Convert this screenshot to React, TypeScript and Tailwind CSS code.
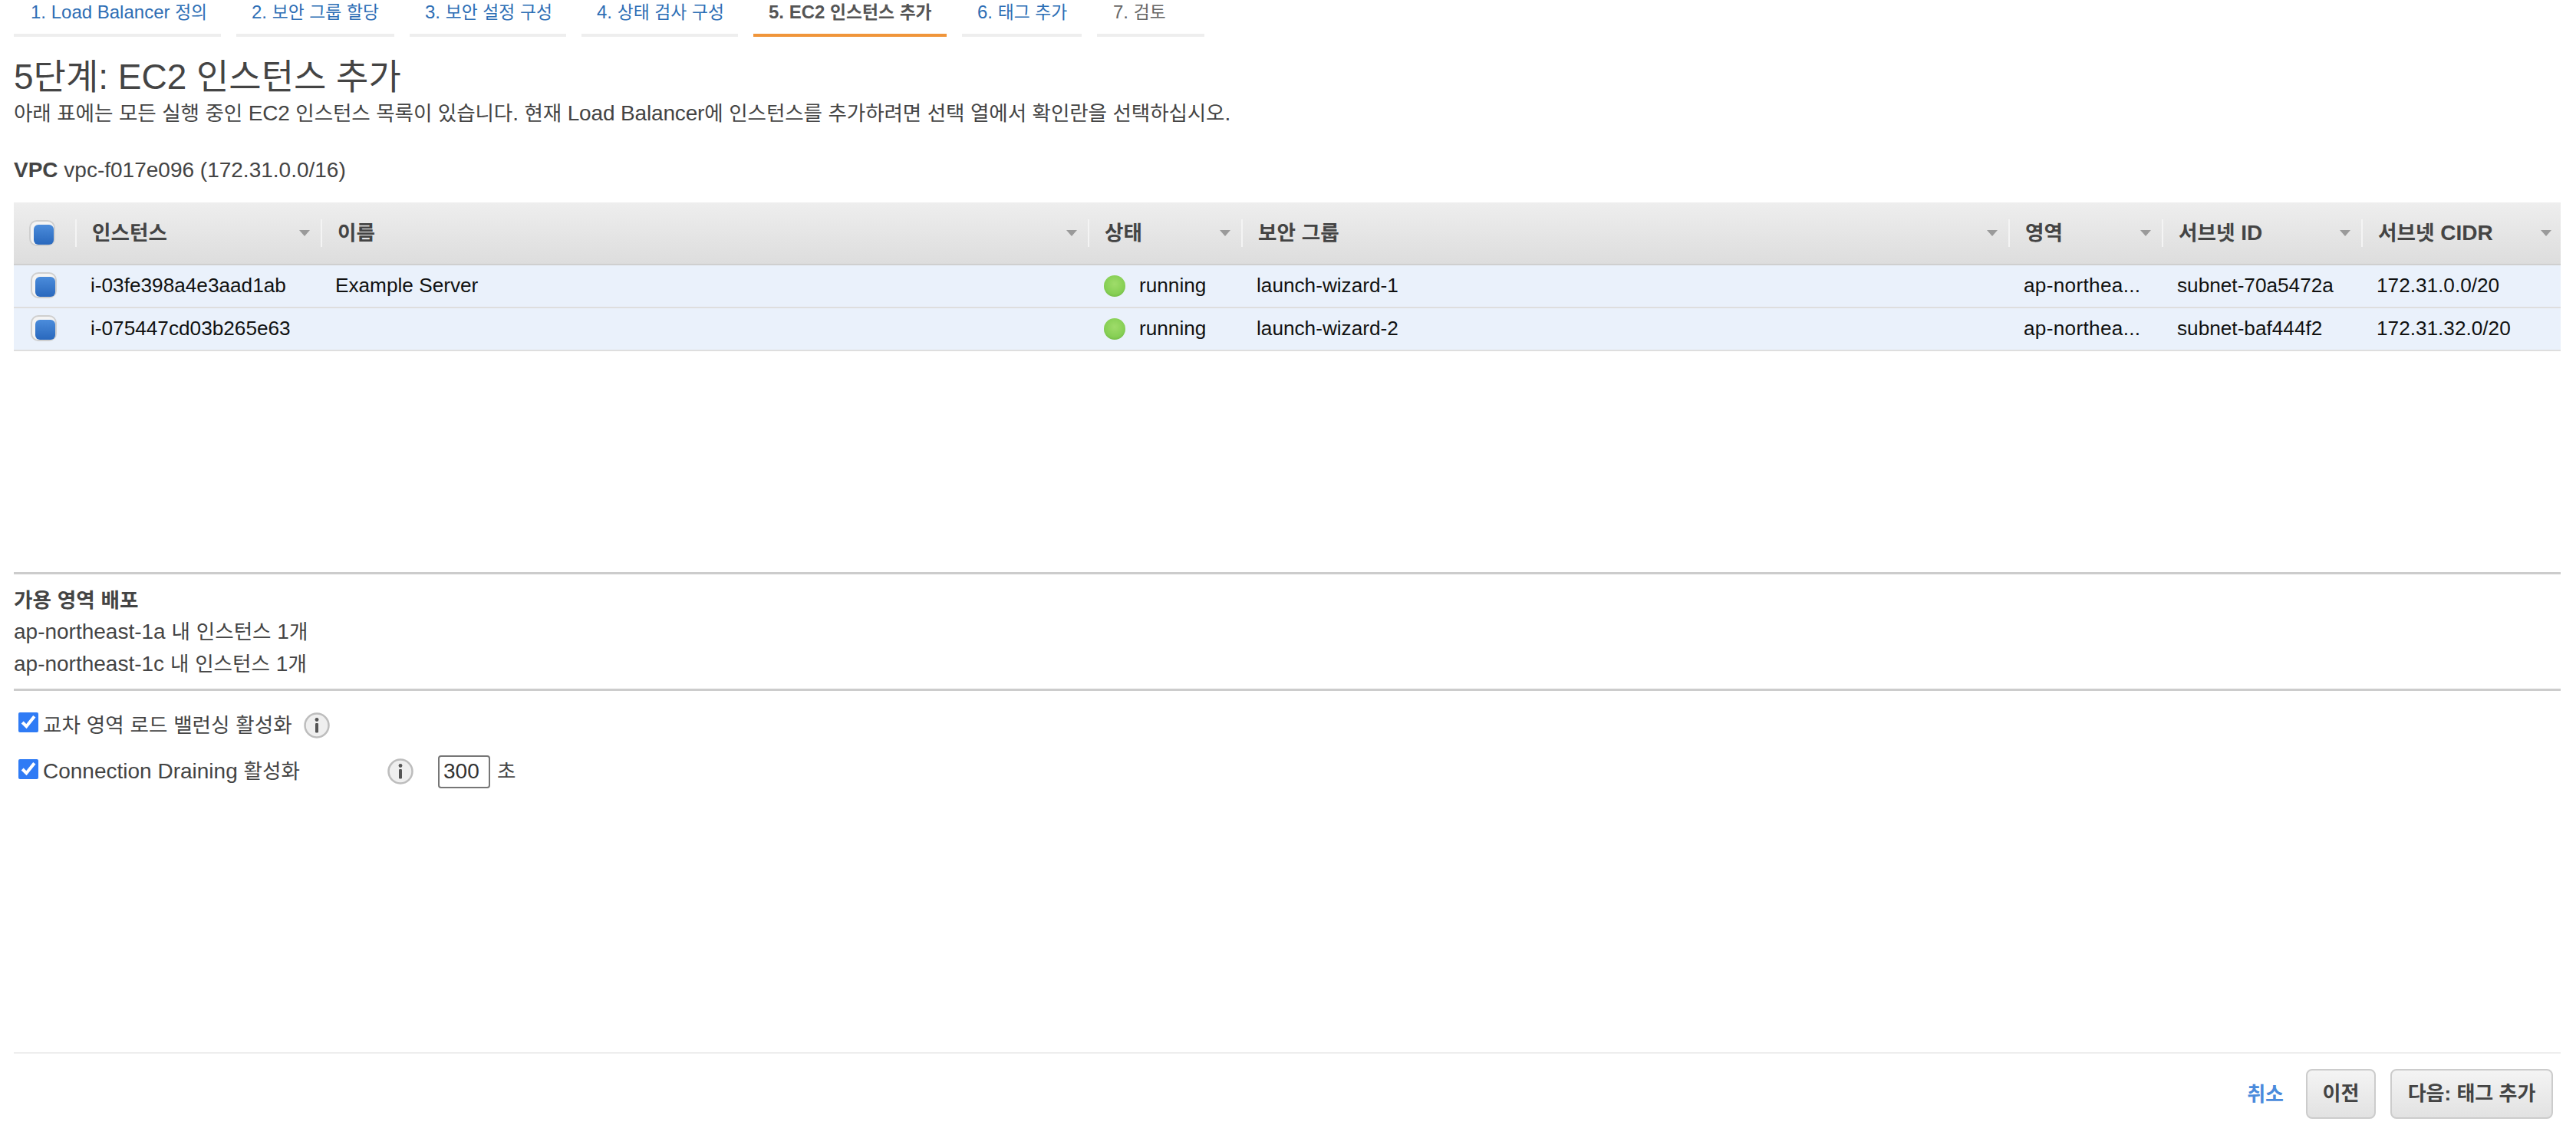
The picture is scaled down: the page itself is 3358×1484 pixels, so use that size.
const steps = [
  { label: "1. Load Balancer 정의", width: "w-[270px] pl-[22px] text-[#2d6eb5]", bar: "border-[#eeeeee]" },
  { label: "2. 보안 그룹 할당", width: "w-[206px] pl-[20px] text-[#2d6eb5]", bar: "border-[#eeeeee]" },
  { label: "3. 보안 설정 구성", width: "w-[204px] pl-[20px] text-[#2d6eb5]", bar: "border-[#eeeeee]" },
  { label: "4. 상태 검사 구성", width: "w-[204px] pl-[20px] text-[#2d6eb5]", bar: "border-[#eeeeee]" },
  { label: "5. EC2 인스턴스 추가", width: "w-[252px] pl-[20px] font-bold text-[#555555]", bar: "border-[#f0953a]" },
  { label: "6. 태그 추가", width: "w-[156px] pl-[20px] text-[#2d6eb5]", bar: "border-[#eeeeee]" },
  { label: "7. 검토", width: "w-[140px] pl-[21px] text-[#666666]", bar: "border-[#eeeeee]" },
];

const columns = ["인스턴스", "이름", "상태", "보안 그룹", "영역", "서브넷 ID", "서브넷 CIDR"];

const instances = [
  { id: "i-03fe398a4e3aad1ab", name: "Example Server", group: "launch-wizard-1", zone: "ap-northea...", subnet: "subnet-70a5472a", cidr: "172.31.0.0/20" },
  { id: "i-075447cd03b265e63", name: "", group: "launch-wizard-2", zone: "ap-northea...", subnet: "subnet-baf444f2", cidr: "172.31.32.0/20" },
];

const gridCols = "grid grid-cols-[80px_320px_1000px_200px_1000px_200px_260px_260px]";

// hangul runs a bit smaller than the latin around them
function Mixed({ text }: { text: string }) {
  return (
    <>
      {text.split(/([가-힣]+)/).map((part, i) =>
        /[가-힣]/.test(part) ? (
          <span key={i} className="text-[0.95em]">
            {part}
          </span>
        ) : (
          part
        ),
      )}
    </>
  );
}

function RowCheck() {
  return (
    <div className="flex h-[34px] w-[34px] items-end justify-end rounded-[10px] border-2 border-[#cfcfcf] bg-[#f4f4f4]">
      <div className="h-[26px] w-[26px] rounded-[6px] bg-linear-to-b from-[#4b8cdb] to-[#2968bd]" />
    </div>
  );
}

function InfoIcon() {
  return (
    <svg width="34" height="34" viewBox="0 0 34 34" className="shrink-0">
      <circle cx="17" cy="17" r="15.5" fill="#efefef" stroke="#bdbdbd" strokeWidth="2.5" />
      <circle cx="17" cy="9.5" r="2.4" fill="#555555" />
      <rect x="15" y="14" width="4" height="12.5" rx="1.2" fill="#555555" />
    </svg>
  );
}

export default function App() {
  return (
    <div className="flex h-[1484px] flex-col overflow-hidden bg-white pl-[18px] pr-[20px] font-['Liberation_Sans','Noto_Sans_CJK_KR',sans-serif] text-[28px] text-[#444444]">
      <div className="flex gap-5">
        {steps.map((step) => (
          <div key={step.label} className={`h-[48px] border-b-4 text-[24px] leading-[32px] ${step.width} ${step.bar}`}>
            <Mixed text={step.label} />
          </div>
        ))}
      </div>

      <h1 className="mt-[26px] text-[46px] leading-[52px]">5단계: EC2 인스턴스 추가</h1>
      <p className="mt-[4px] leading-[36px] tracking-[-0.15px]">
        <Mixed text="아래 표에는 모든 실행 중인 EC2 인스턴스 목록이 있습니다. 현재 Load Balancer에 인스턴스를 추가하려면 선택 열에서 확인란을 선택하십시오." />
      </p>
      <p className="mt-[38px] leading-[36px]">
        <b>VPC</b> vpc-f017e096 (172.31.0.0/16)
      </p>

      <div className="mt-[24px]">
        <div className={`${gridCols} h-[82px] items-center border-b-2 border-[#cfcfcf] bg-linear-to-b from-[#eeeeee] to-[#dddddd]`}>
          <div className="flex justify-start pl-[20px]">
            <RowCheck />
          </div>
          {columns.map((col) => (
            <div key={col} className="flex h-[36px] items-center justify-between border-l-2 border-[#f4f4f4] pl-[20px] pr-[14px] font-bold last:pr-[12px]">
              <span>
                <Mixed text={col} />
              </span>
              <span className="h-0 w-0 border-x-[7px] border-t-[8px] border-x-transparent border-t-[#9a9a9a]" />
            </div>
          ))}
        </div>
        {instances.map((row) => (
          <div key={row.id} className={`${gridCols} h-[56px] items-center border-b-2 border-[#dedede] bg-[#eaf1fb] text-[26.2px] text-[#111111]`}>
            <div className="-mt-[3px] pl-[22px]">
              <RowCheck />
            </div>
            <div className="pl-[20px]">{row.id}</div>
            <div className="pl-[19px]">{row.name}</div>
            <div className="flex items-center gap-[18px] pl-[21px]">
              <span className="mt-[1px] h-[28px] w-[28px] rounded-full bg-[radial-gradient(circle_at_50%_40%,#9fdc6a_0%,#86cf54_60%,#5fa838_100%)]" />
              running
            </div>
            <div className="pl-[20px]">{row.group}</div>
            <div className="pl-[20px] tracking-[0.3px]">{row.zone}</div>
            <div className="pl-[20px]">{row.subnet}</div>
            <div className="pl-[20px]">{row.cidr}</div>
          </div>
        ))}
      </div>

      <div className="mt-[288px] border-t-[3px] border-[#cccccc] pt-[14px]">
        <div className="font-bold leading-[40px]">
          <Mixed text="가용 영역 배포" />
        </div>
        <div className="leading-[42px]">
          <Mixed text="ap-northeast-1a 내 인스턴스 1개" />
        </div>
        <div className="leading-[42px]">
          <Mixed text="ap-northeast-1c 내 인스턴스 1개" />
        </div>
      </div>

      <div className="mt-[11px] flex flex-col border-t-[3px] border-[#cccccc] pt-[23px]">
        <div className="flex h-[44px] items-center pl-[6px]">
          <input type="checkbox" defaultChecked className="-mt-[8px] mr-[6px] h-[26px] w-[26px] shrink-0 accent-[#2f7bf5]" />
          <span className="w-[340px]">
            <Mixed text="교차 영역 로드 밸런싱 활성화" />
          </span>
          <InfoIcon />
        </div>
        <div className="mt-[16px] flex h-[44px] items-center pl-[6px]">
          <input type="checkbox" defaultChecked className="-mt-[6px] mr-[6px] h-[26px] w-[26px] shrink-0 accent-[#2f7bf5]" />
          <span className="w-[449px]">
            <Mixed text="Connection Draining 활성화" />
          </span>
          <InfoIcon />
          <input
            readOnly
            value="300"
            className="ml-[32px] h-[43px] w-[68px] rounded-[4px] border-2 border-[#767676] px-[5px] text-[28px] text-[#333333]"
          />
          <span className="ml-[9px]">
            <Mixed text="초" />
          </span>
        </div>
      </div>

      <div className="mt-auto flex h-[112px] items-start justify-end border-t-2 border-[#eeeeee] pr-[10px] pt-[20px] text-[26px]">
        <a className="mr-[29px] mt-[17px] font-bold leading-[32px] text-[#4a8bdc]">취소</a>
        <button className="h-[65px] w-[91px] rounded-[8px] border-2 border-[#cccccc] bg-linear-to-b from-[#f4f4f4] to-[#e2e2e2] font-bold text-[#444444]">
          이전
        </button>
        <button className="ml-[19px] h-[65px] w-[212px] rounded-[8px] border-2 border-[#cccccc] bg-linear-to-b from-[#f4f4f4] to-[#e2e2e2] font-bold text-[#444444]">
          다음: 태그 추가
        </button>
      </div>
    </div>
  );
}
